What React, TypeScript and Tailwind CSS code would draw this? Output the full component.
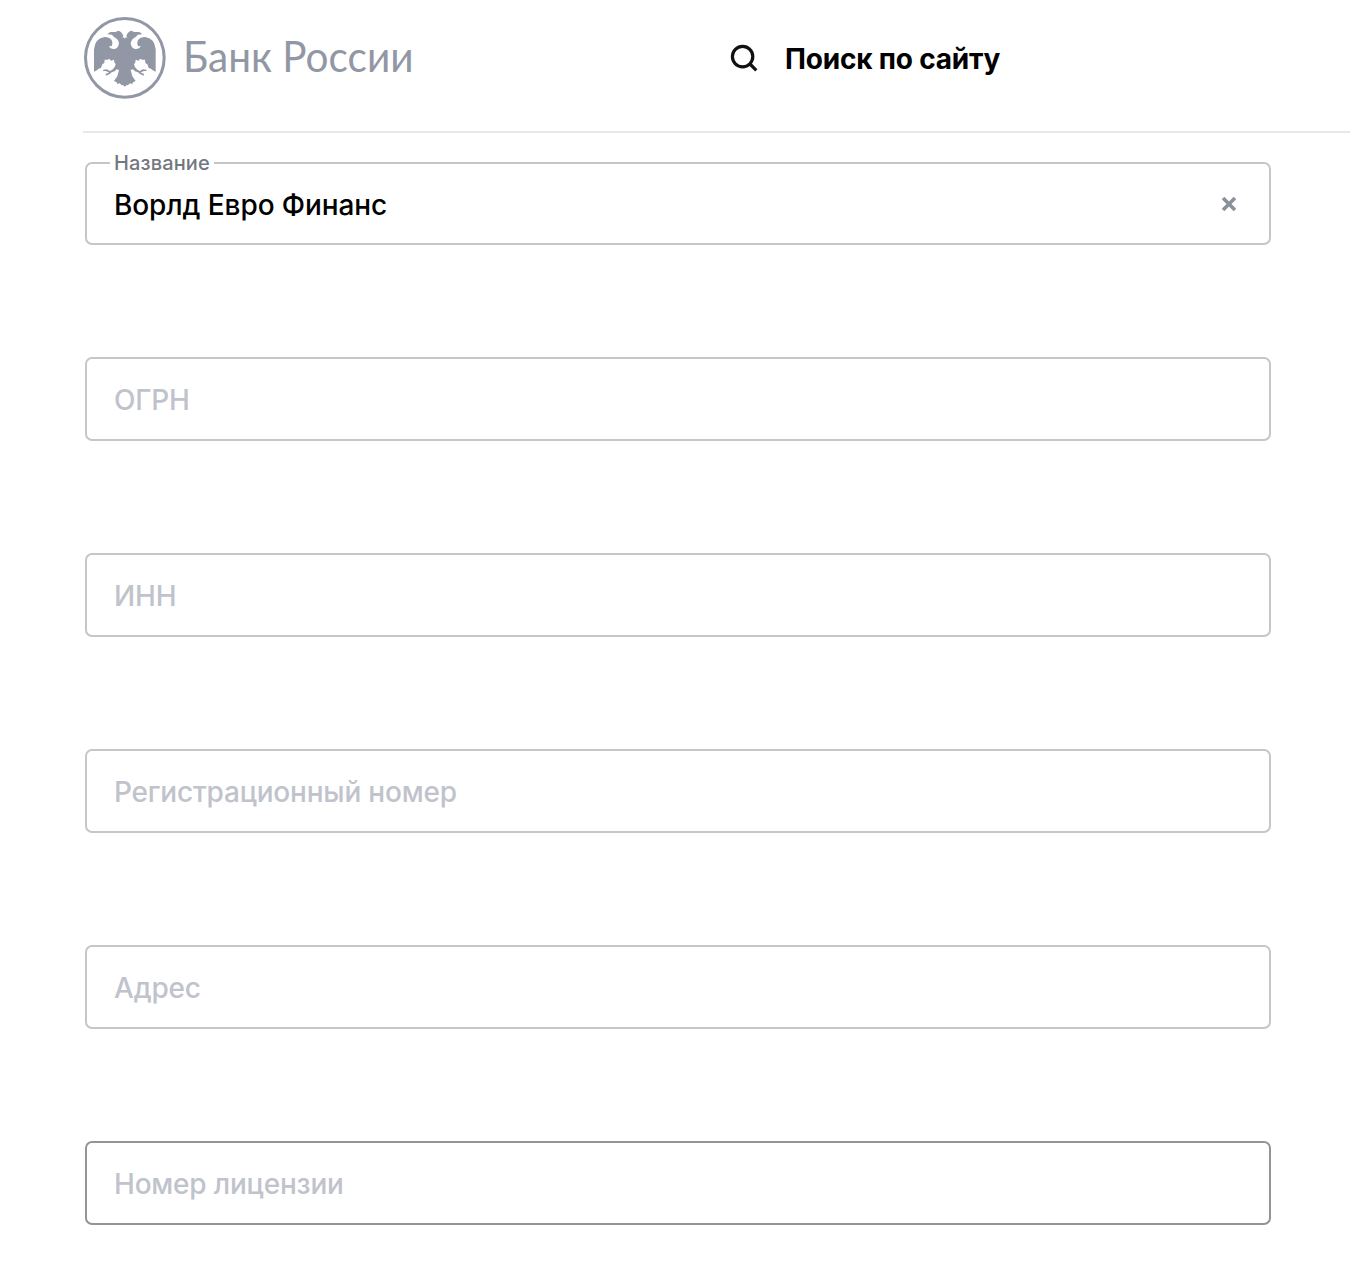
import { useState } from "react";

const FIELDS = [
  { id: "name", label: "Название" },
  { id: "ogrn", label: "ОГРН" },
  { id: "inn", label: "ИНН" },
  { id: "regNumber", label: "Регистрационный номер" },
  { id: "address", label: "Адрес" },
  { id: "license", label: "Номер лицензии", active: true },
];

const HALF_EAGLE =
  "M147 88 L144 82 L139 83 L142 78 Q138 64 126 62 L119 66 L105 66 Q97 67 95 73 L108 74 L113 80 Q126 86 129 99 Q128 114 116 117 Q102 118 99 108 L107 109 Q112 99 107 90 Q100 81 86 81 Q57 85 54 118 L54 185 L64 180 L68 176 L75 174 L79 163 L85 159 L86 149 L95 149 L100 146 L105 152 L114 149 L115 157 L119 163 L116 171 L109 179 L101 183 L93 178 L82 179 L80 182 L92 184 L99 188 L89 191 L90 197 L101 192 L107 187 L116 184 L122 178 L129 180 L124 199 L114 213 L122 217 L124 222 L131 220 L137 226 L142 225 L143 229 L147 229 Z";

function Emblem() {
  return (
    <svg viewBox="0 0 300 288" className="h-24 w-[100px] shrink-0" fill="#9297a5">
      <circle cx="146.5" cy="143.5" r="118" fill="none" stroke="#9297a5" strokeWidth="9" />
      <path d={HALF_EAGLE} />
      <path d={HALF_EAGLE} transform="translate(293 0) scale(-1 1)" />
    </svg>
  );
}

function SearchIcon() {
  return (
    <svg viewBox="0 0 28 28" className="h-7 w-7" fill="none" stroke="#111" strokeWidth="3.2">
      <circle cx="12.6" cy="12.6" r="10.2" />
      <path d="M20 20l6.3 6.3" />
    </svg>
  );
}

function Header() {
  return (
    <header className="ml-[83px] flex h-[133px] border-b-2 border-[#e7e8e9]">
      <div className="-ml-[7px] mt-2.5 flex h-24 w-[654px]">
        <Emblem />
        <span className="ml-[7px] mt-[22px] origin-left scale-x-[0.965] whitespace-nowrap font-['Lato','Liberation_Sans',sans-serif] text-[42px] leading-[48px] text-[#9297a5]">
          Банк России
        </span>
      </div>
      <button className="mt-[38px] flex h-10 items-center gap-[27px]">
        <SearchIcon />
        <span className="whitespace-nowrap pt-px text-[28px] font-bold leading-10 tracking-[-0.2px] text-black">
          Поиск по сайту
        </span>
      </button>
    </header>
  );
}

interface FieldProps {
  label: string;
  value: string;
  active?: boolean;
  onChange: (value: string) => void;
}

function Field({ label, value, active, onChange }: FieldProps) {
  return (
    <div
      className={`relative flex items-center rounded-[7px] border-2 pl-[27px] pr-[33px] ${value ? "mt-px h-[83px]" : "h-[84px]"} ${active ? "border-[#929497]" : "border-[#c5c6c8]"}`}
    >
      {value && (
        <span className="absolute -top-[13px] left-[23px] bg-white px-1 text-[20px] font-medium leading-6 tracking-[0.12px] text-[#737780]">
          {label}
        </span>
      )}
      <input
        value={value}
        placeholder={label}
        onChange={(e) => onChange(e.target.value)}
        className="h-full min-w-0 flex-1 bg-transparent pt-0.5 text-[28px] font-medium tracking-[-0.1px] text-black outline-none placeholder:tracking-[-0.2px] placeholder:text-[#c0c3cc]"
      />
      {value && (
        <button onClick={() => onChange("")}>
          <svg viewBox="0 0 14 14" className="h-3.5 w-3.5" stroke="#8b909d" strokeWidth="3.6">
            <path d="M1 1l12 12M13 1L1 13" />
          </svg>
        </button>
      )}
    </div>
  );
}

export default function App() {
  const [values, setValues] = useState<Record<string, string>>({ name: "Ворлд Евро Финанс" });

  return (
    <div className="h-[1268px] overflow-hidden bg-white font-['Inter','Liberation_Sans',sans-serif]">
      <Header />
      <form className="ml-[85px] mt-7 flex w-[1186px] flex-col gap-28">
        {FIELDS.map((field) => (
          <Field
            key={field.id}
            label={field.label}
            active={field.active}
            value={values[field.id] ?? ""}
            onChange={(value) => setValues({ ...values, [field.id]: value })}
          />
        ))}
      </form>
    </div>
  );
}
